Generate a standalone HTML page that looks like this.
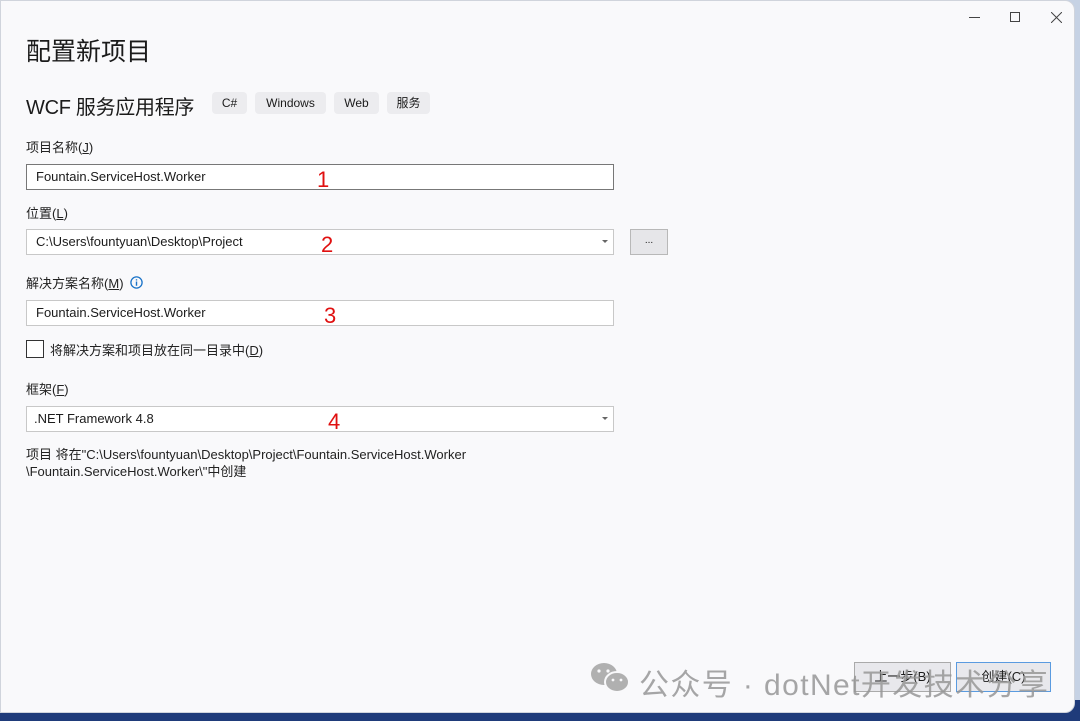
<!DOCTYPE html>
<html><head><meta charset="utf-8"><style>
*{margin:0;padding:0;box-sizing:border-box}
body{width:1080px;height:721px;overflow:hidden;background:#1f3b7a;font-family:"Liberation Sans","Noto Sans CJK SC",sans-serif;color:#1b1b1b;position:relative}
#bgtop{position:absolute;left:0;top:0;width:1080px;height:700px;background:#c6d2e4}
#win{position:absolute;left:0;top:0;width:1075px;height:713px;background:#f9f9fb;border-radius:0 10px 10px 0;border:1px solid #d0d4dc}
.a{position:absolute;white-space:nowrap}
.lbl{font-size:13px;color:#222}
.box{position:absolute;background:#fff;border:1px solid #c8c8c8;font-size:13px;padding-left:9px;line-height:24px}
.tag{position:absolute;top:91px;height:22px;background:#ececef;border-radius:4px;font-size:12px;line-height:22px;text-align:center}
.num{position:absolute;color:#e01010;font-size:22px;font-family:"Liberation Sans",sans-serif}
.arr{position:absolute;right:5px;top:10px;width:0;height:0;border-left:3px solid transparent;border-right:3px solid transparent;border-top:3px solid #666}
</style></head><body>
<div id="bgtop"></div>
<div id="win">
<div class="a" style="left:968px;top:16px;width:11px;height:1px;background:#444"></div>
<div class="a" style="left:1009px;top:11px;width:10px;height:10px;border:1px solid #444"></div>
<svg class="a" style="left:1050px;top:11px" width="11" height="11"><path d="M0 0L11 11M11 0L0 11" stroke="#444" stroke-width="1"/></svg>
<div class="a" style="left:25px;top:31px;font-size:25px;color:#1b1b1b">配置新项目</div>
<div class="a" style="left:25px;top:90px;font-size:20px;letter-spacing:-0.3px">WCF 服务应用程序</div>
<div class="tag" style="left:211px;width:35px">C#</div>
<div class="tag" style="left:254px;width:71px">Windows</div>
<div class="tag" style="left:333px;width:45px">Web</div>
<div class="tag" style="left:386px;width:43px">服务</div>
<div class="a lbl" style="left:25px;top:136px">项目名称(<u>J</u>)</div>
<div class="box" style="left:25px;top:163px;width:588px;height:26px;border:1px solid #777">Fountain.ServiceHost.Worker</div>
<div class="num" style="left:316px;top:166px">1</div>
<div class="a lbl" style="left:25px;top:202px">位置(<u>L</u>)</div>
<div class="box" style="left:25px;top:228px;width:588px;height:26px">C:\Users\fountyuan\Desktop\Project<div class="arr"></div></div>
<div class="num" style="left:320px;top:231px">2</div>
<div class="a" style="left:629px;top:228px;width:38px;height:26px;background:#e6e6e9;border:1px solid #b8b8b8;font-size:10px;text-align:center;line-height:22px">...</div>
<div class="a lbl" style="left:25px;top:272px">解决方案名称(<u>M</u>)</div>
<svg class="a" style="left:129px;top:275px" width="13" height="13"><circle cx="6.5" cy="6.5" r="5.6" fill="none" stroke="#1a73c8" stroke-width="1.3"/><path d="M6.5 5.5v4.2M6.5 3.2v1.3" stroke="#1a73c8" stroke-width="1.4"/></svg>
<div class="box" style="left:25px;top:299px;width:588px;height:26px">Fountain.ServiceHost.Worker</div>
<div class="num" style="left:323px;top:302px">3</div>
<div class="a" style="left:25px;top:339px;width:18px;height:18px;border:1px solid #333;background:#fff"></div>
<div class="a lbl" style="left:49px;top:339px">将解决方案和项目放在同一目录中(<u>D</u>)</div>
<div class="a lbl" style="left:25px;top:378px">框架(<u>F</u>)</div>
<div class="box" style="left:25px;top:405px;width:588px;height:26px;padding-left:7px">.NET Framework 4.8<div class="arr"></div></div>
<div class="num" style="left:327px;top:408px">4</div>
<div class="a lbl" style="left:25px;top:445px;line-height:17px">项目 将在"C:\Users\fountyuan\Desktop\Project\Fountain.ServiceHost.Worker<br>\Fountain.ServiceHost.Worker\"中创建</div>
<div class="a" style="left:853px;top:661px;width:97px;height:30px;background:#e8e8ec;border:1px solid #aaa;font-size:13px;text-align:center;line-height:28px">上一步(B)</div>
<div class="a" style="left:955px;top:661px;width:95px;height:30px;background:#e8e8ec;border:1px solid #5a9be0;font-size:13px;text-align:center;line-height:28px">创建(C)</div>
<svg class="a" style="left:588px;top:660px" width="42" height="34"><ellipse cx="15" cy="13" rx="13" ry="11" fill="#b0b0b0"/><ellipse cx="28" cy="21" rx="12" ry="10" fill="#b0b0b0" stroke="#f9f9fb" stroke-width="2"/><circle cx="10" cy="10" r="1.6" fill="#f9f9fb"/><circle cx="19" cy="10" r="1.6" fill="#f9f9fb"/><circle cx="24" cy="19" r="1.4" fill="#f9f9fb"/><circle cx="32" cy="19" r="1.4" fill="#f9f9fb"/></svg>
<div class="a" style="left:638px;top:659px;font-size:30px;letter-spacing:1.4px;color:rgba(150,150,150,0.85)">公众号 · dotNet开发技术分享</div>
</div>
</body></html>
